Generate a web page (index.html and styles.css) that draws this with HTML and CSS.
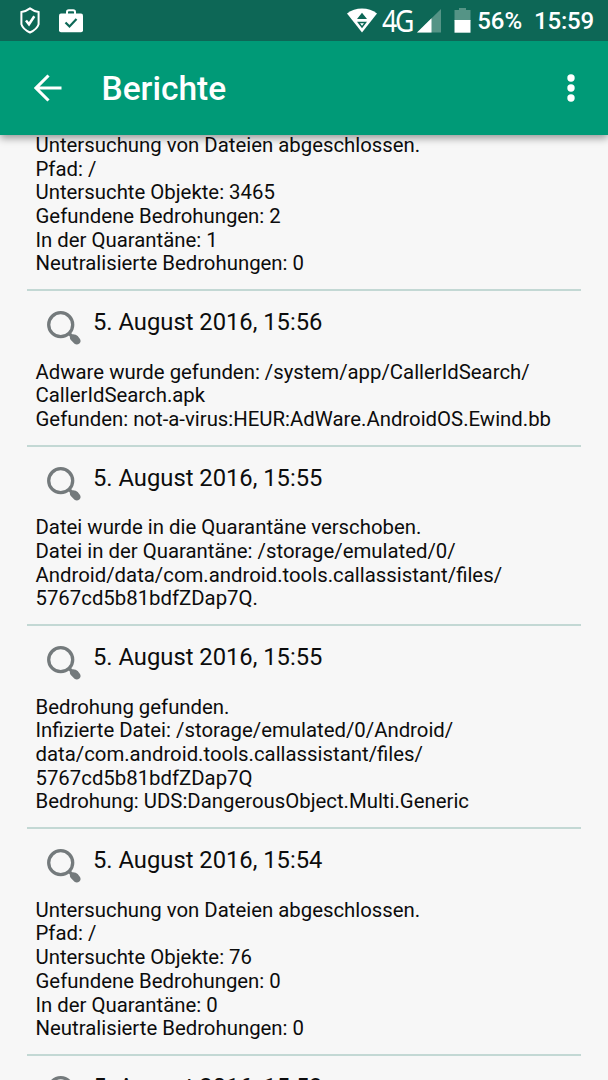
FILE: index.html
```html
<!DOCTYPE html>
<html lang="de">
<head>
    <meta charset="UTF-8">
    <meta name="viewport" content="width=device-width, initial-scale=1.0">
    <title>Berichte</title>
    <link rel="stylesheet" href="styles.css">
</head>
<body>
    <!-- Search icon shared by all reports -->
    <svg class="sprite" width="0" height="0">
        <symbol id="search" viewBox="0 0 36 36">
            <circle cx="14.7" cy="14.7" r="12" fill="none" stroke="#747a7c" stroke-width="3.3"/>
            <path d="M21.5 24l2.3-2.4 2.4 2.6q3.5-.3 5.500 1.900l2.300 2.900q1.400 2.700-.6 4.500-2.400 1.600-4.900.3l-3.200-3.200q-1.700-1.900-1.500-4.200z" fill="#747a7c"/>
        </symbol>
    </svg>

    <div class="screen">
        <div class="status-bar">
            <svg class="shield" width="20" height="27" viewBox="0 0 20 27">
                <path d="M10 1.400q4 3 8.600 3.700v12.200q-1.500 5-8.600 8.200-7.100-3.200-8.600-8.200V5.100Q6 4.400 10 1.400z" fill="none" stroke="#fff" stroke-width="2"/>
                <path d="M6 13.500l3 3.800 5.300-8" fill="none" stroke="#fff" stroke-width="2.500"/>
            </svg>
            <svg class="briefcase" width="24" height="24" viewBox="0 0 24 24">
                <path d="M8 5V3q0-1.800 1.800-1.800h4.400q1.800 0 1.800 1.800v2" fill="none" stroke="#fff" stroke-width="2"/>
                <rect x="0" y="4.500" width="24" height="18.700" rx="2" fill="#fff"/>
                <path d="M6.500 13.500l4 4 7-7.500" fill="none" stroke="#0d6756" stroke-width="2.200"/>
            </svg>
            <svg class="wifi" width="30" height="25" viewBox="0 0 30 25">
                <path d="M0 5.500Q6.500.500 15 .500t15 5L15 24.500z" fill="#fff"/>
                <path d="M15 4.800l5 6.200H10zM10 13.700h10l-5 6.500z" fill="#0d6756"/>
                <path d="M13 15.200h4l-2 2.500z" fill="#fff"/>
            </svg>
            <span class="network">4G</span>
            <svg class="signal" width="24" height="24" viewBox="0 0 24 24">
                <path d="M24 0v23.500H0z" fill="#559486"/>
                <path d="M14.500 9.300v14.200H0z" fill="#fff"/>
            </svg>
            <svg class="battery" width="17" height="25" viewBox="0 0 17 25">
                <path d="M5 0h7v2h4.500v11H.500V2H5z" fill="#559486"/>
                <path d="M.500 12h16v12.700H.500z" fill="#fff"/>
            </svg>
            <span class="percent">56%</span>
            <span class="time">15:59</span>
        </div>

        <div class="toolbar">
            <svg class="back" width="28" height="28" viewBox="0 0 28 28">
                <path d="M14.500 1.500L2 14l12.500 12.500M2 14h25.500" fill="none" stroke="#fff" stroke-width="3.100"/>
            </svg>
            <h1>Berichte</h1>
            <svg class="more" width="8" height="28" viewBox="0 0 8 28">
                <g fill="#fff">
                    <circle cx="4" cy="4" r="3.700"/>
                    <circle cx="4" cy="14" r="3.700"/>
                    <circle cx="4" cy="24" r="3.700"/>
                </g>
            </svg>
        </div>

        <div class="reports">
            <div class="report">
                <p>Untersuchung von Dateien abgeschlossen.<br>Pfad: /<br>Untersuchte Objekte: 3465<br>Gefundene Bedrohungen: 2<br>In der Quarantäne: 1<br>Neutralisierte Bedrohungen: 0</p>
            </div>
            <div class="report">
                <div class="report-head">
                    <svg class="search"><use href="#search"/></svg>
                    <h2>5. August 2016, 15:56</h2>
                </div>
                <p>Adware wurde gefunden: /system/app/CallerIdSearch/<br>CallerIdSearch.apk<br>Gefunden: not-a-virus:HEUR:AdWare.AndroidOS.Ewind.bb</p>
            </div>
            <div class="report">
                <div class="report-head">
                    <svg class="search"><use href="#search"/></svg>
                    <h2>5. August 2016, 15:55</h2>
                </div>
                <p>Datei wurde in die Quarantäne verschoben.<br>Datei in der Quarantäne: /storage/emulated/0/<br>Android/data/com.android.tools.callassistant/files/<br>5767cd5b81bdfZDap7Q.</p>
            </div>
            <div class="report">
                <div class="report-head">
                    <svg class="search"><use href="#search"/></svg>
                    <h2>5. August 2016, 15:55</h2>
                </div>
                <p>Bedrohung gefunden.<br>Infizierte Datei: /storage/emulated/0/Android/<br>data/com.android.tools.callassistant/files/<br>5767cd5b81bdfZDap7Q<br>Bedrohung: UDS:DangerousObject.Multi.Generic</p>
            </div>
            <div class="report">
                <div class="report-head">
                    <svg class="search"><use href="#search"/></svg>
                    <h2>5. August 2016, 15:54</h2>
                </div>
                <p>Untersuchung von Dateien abgeschlossen.<br>Pfad: /<br>Untersuchte Objekte: 76<br>Gefundene Bedrohungen: 0<br>In der Quarantäne: 0<br>Neutralisierte Bedrohungen: 0</p>
            </div>
            <div class="report">
                <div class="report-head">
                    <svg class="search"><use href="#search"/></svg>
                    <h2>5. August 2016, 15:53</h2>
                </div>
            </div>
        </div>
    </div>
</body>
</html>
```

FILE: styles.css
```css
* {
    box-sizing: border-box;
}
body {
    margin: 0;
    font-family: Roboto, "Liberation Sans", sans-serif;
    background: #f7f7f7;
    color: #0c0c0c;
}
h1, h2, p {
    margin: 0;
    white-space: nowrap;
}
svg {
    display: block;
    flex-shrink: 0;
}
.sprite {
    display: none;
}
.screen {
    display: flex;
    flex-direction: column;
    height: 1080px;
    overflow: hidden;
}

/* Status bar */
.status-bar {
    display: flex;
    align-items: center;
    flex-shrink: 0;
    height: 41px;
    padding: 0 14px 0 20px;
    background: #0d6756;
    color: #fff;
    z-index: 2;
}
.briefcase {
    margin-left: 19px;
}
.wifi {
    margin-left: auto;
}
.network {
    margin: -1px 0 0 5px;
    width: 35px;
    font-family: "Noto Sans", sans-serif;
    font-size: 31px;
    line-height: 36px;
    letter-spacing: -2.5px;
    white-space: nowrap;
    transform: scaleX(0.86);
    transform-origin: left;
}
.battery {
    margin-left: 13.5px;
}
.percent, .time {
    margin-top: 1px;
    font-size: 24px;
    font-weight: 500;
    line-height: 28px;
    white-space: nowrap;
}
.percent {
    margin-left: 6px;
}
.time {
    margin-left: 12px;
    letter-spacing: -0.2px;
}

/* Toolbar */
.toolbar {
    display: flex;
    align-items: center;
    flex-shrink: 0;
    height: 94px;
    padding: 0 33px 0 34px;
    background: #009a77;
    color: #fff;
    box-shadow: 0 3px 8px rgba(0, 0, 0, 0.4);
    z-index: 1;
}
.toolbar h1 {
    margin: 2px 0 0 39.5px;
    font-size: 33.5px;
    font-weight: 500;
    line-height: 40px;
}
.more {
    margin-left: auto;
}

/* Reports */
.reports {
    flex: 1;
    min-height: 0;
    margin-top: -1px;
    padding: 0 27px;
    overflow: hidden;
}
.report {
    border-bottom: 2px solid #c3d8d4;
    padding: 0 0 13px 8.5px;
}
.report p {
    font-size: 20.35px;
    line-height: 23.68px;
}
.report-head {
    display: flex;
    height: 69.6px;
    padding: 17px 0 0 10.5px;
}
.search {
    width: 36px;
    height: 36px;
    margin-top: 2px;
}
.report-head h2 {
    margin-left: 11px;
    font-size: 23.75px;
    font-weight: 400;
    line-height: 28px;
}
```
